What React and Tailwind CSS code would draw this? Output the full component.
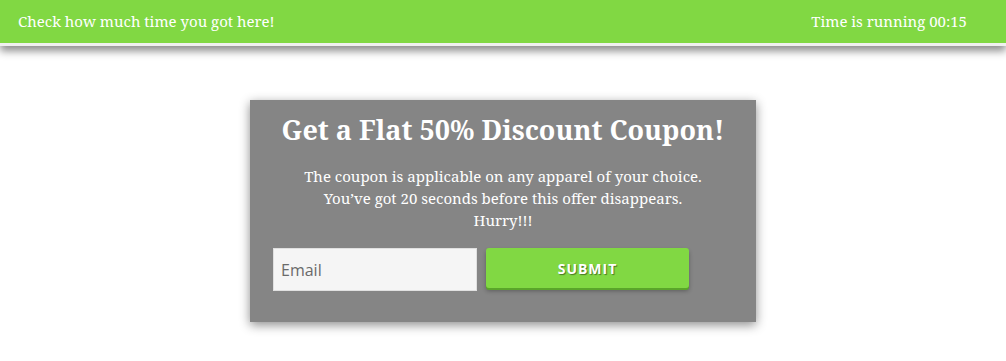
export default function App() {
  const serif = { fontFamily: '"Noto Serif", "Droid Serif", "DejaVu Serif", serif' };
  return (
    <div className="min-h-[361px] bg-white" style={serif}>
      <div className="h-[43px] bg-[#81d843] border-b-[3px] border-[#f0f0f0] shadow-[0_5px_8px_rgba(0,0,0,0.45)] box-content flex items-center justify-between pl-[18px] pr-[39px] text-[15px] text-white">
        <span>Check how much time you got here!</span>
        <span>Time is running 00:15</span>
      </div>

      <div className="flex justify-center pt-[54px] pb-[39px]">
        <div className="w-[506px] h-[222px] bg-[#858585] shadow-[0_3px_10px_rgba(0,0,0,0.45)] pl-[23px] pr-[23px] pt-[11px] text-white">
          <h1 className="text-center text-[27px] font-bold leading-[38px]">
            Get a Flat 50% Discount Coupon!
          </h1>
          <p className="mt-[16px] text-center text-[15px] leading-[22px]">
            The coupon is applicable on any apparel of your choice.
            <br />
            You’ve got 20 seconds before this offer disappears.
            <br />
            Hurry!!!
          </p>
          <div className="mt-[17px] flex gap-[9px]">
            <input
              type="text"
              placeholder="Email"
              className="w-[204px] h-[43px] bg-[#f5f5f5] border border-[#e0e0e0] px-[7px] text-[16px] text-[#555] placeholder:text-[#6a6a6a] outline-none"
              style={{ fontFamily: '"Open Sans", sans-serif' }}
            />
            <button
              type="button"
              className="w-[203px] h-[40px] bg-[#81d843] rounded-[3px] shadow-[0_2px_0_#5aa52a,0_3px_4px_rgba(0,0,0,0.3)] text-white text-[14px] font-bold tracking-[1px] [text-shadow:1px_1px_1px_rgba(0,0,0,0.45)]"
              style={{ fontFamily: '"Open Sans", sans-serif' }}
            >
              SUBMIT
            </button>
          </div>
        </div>
      </div>
    </div>
  );
}
